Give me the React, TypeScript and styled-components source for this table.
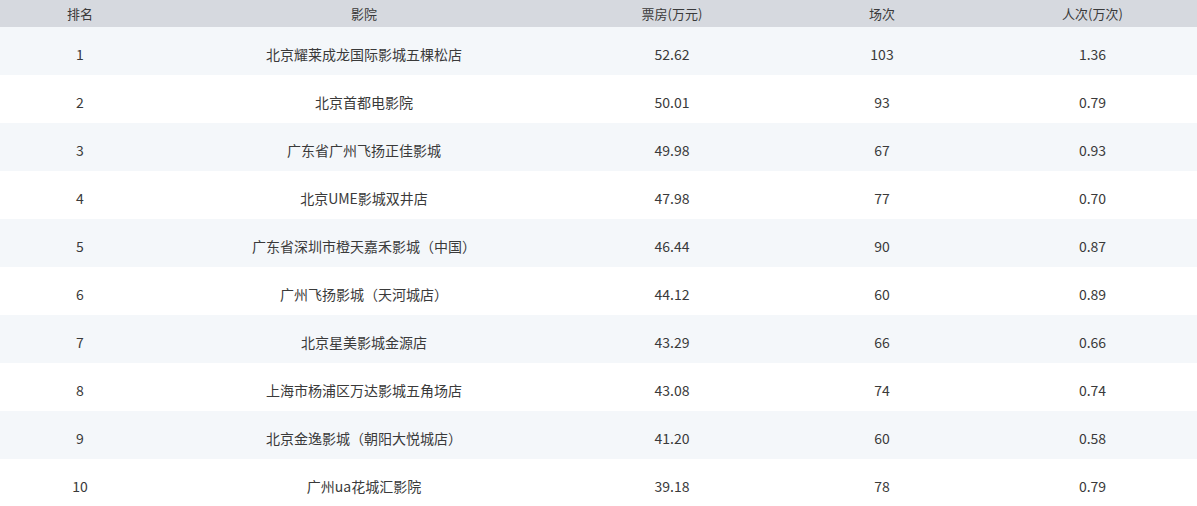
import React from "react";
import styled, { createGlobalStyle } from "styled-components";

// Type
interface Row {
  rank: number;
  cinema: string;
  boxOffice: string;
  shows: number;
  viewers: string;
}

const rows: Row[] = [
  { rank: 1, cinema: "北京耀莱成龙国际影城五棵松店", boxOffice: "52.62", shows: 103, viewers: "1.36" },
  { rank: 2, cinema: "北京首都电影院", boxOffice: "50.01", shows: 93, viewers: "0.79" },
  { rank: 3, cinema: "广东省广州飞扬正佳影城", boxOffice: "49.98", shows: 67, viewers: "0.93" },
  { rank: 4, cinema: "北京UME影城双井店", boxOffice: "47.98", shows: 77, viewers: "0.70" },
  { rank: 5, cinema: "广东省深圳市橙天嘉禾影城（中国）", boxOffice: "46.44", shows: 90, viewers: "0.87" },
  { rank: 6, cinema: "广州飞扬影城（天河城店）", boxOffice: "44.12", shows: 60, viewers: "0.89" },
  { rank: 7, cinema: "北京星美影城金源店", boxOffice: "43.29", shows: 66, viewers: "0.66" },
  { rank: 8, cinema: "上海市杨浦区万达影城五角场店", boxOffice: "43.08", shows: 74, viewers: "0.74" },
  { rank: 9, cinema: "北京金逸影城（朝阳大悦城店）", boxOffice: "41.20", shows: 60, viewers: "0.58" },
  { rank: 10, cinema: "广州ua花城汇影院", boxOffice: "39.18", shows: 78, viewers: "0.79" },
];

const columns = [
  { label: "排名", width: 160 },
  { label: "影院", width: 408 },
  { label: "票房(万元)", width: 208 },
  { label: "场次", width: 212 },
  { label: "人次(万次)", width: 209 },
];

function App() {
  return (
    <>
      <GlobalStyle />
      <Table>
        <colgroup>
          {columns.map((c) => (
            <col key={c.label} style={{ width: c.width }} />
          ))}
        </colgroup>
        <thead>
          <tr>
            {columns.map((c) => (
              <HeadCell key={c.label}>{c.label}</HeadCell>
            ))}
          </tr>
        </thead>
        <tbody>
          {rows.map((r, i) => (
            <BodyRow key={r.rank} $striped={i % 2 === 0}>
              <Cell>{r.rank}</Cell>
              <Cell>{r.cinema}</Cell>
              <Cell>{r.boxOffice}</Cell>
              <Cell>{r.shows}</Cell>
              <Cell>{r.viewers}</Cell>
            </BodyRow>
          ))}
        </tbody>
      </Table>
    </>
  );
}

export default App;

const GlobalStyle = createGlobalStyle`
  html, body {
    margin: 0;
    padding: 0;
    background: #ffffff;
  }
  body {
    font-family: "Microsoft YaHei", "Noto Sans CJK SC", "Noto Sans", sans-serif;
    color: #3a3a3a;
  }
`;

const Table = styled.table`
  width: 1197px;
  border-collapse: collapse;
  table-layout: fixed;
`;

const HeadCell = styled.th`
  height: 27px;
  padding: 0;
  background: #d6d9df;
  font-size: 13px;
  font-weight: normal;
  color: #3a3a3a;
  text-align: center;
  vertical-align: middle;
  line-height: 27px;
`;

const BodyRow = styled.tr<{ $striped: boolean }>`
  background: ${(p) => (p.$striped ? "#f4f7fa" : "#ffffff")};
`;

const Cell = styled.td`
  height: 48px;
  padding: 6px 0 0;
  box-sizing: border-box;
  font-size: 14px;
  line-height: 20px;
  color: #3a3a3a;
  text-align: center;
  vertical-align: middle;
  white-space: nowrap;
`;
